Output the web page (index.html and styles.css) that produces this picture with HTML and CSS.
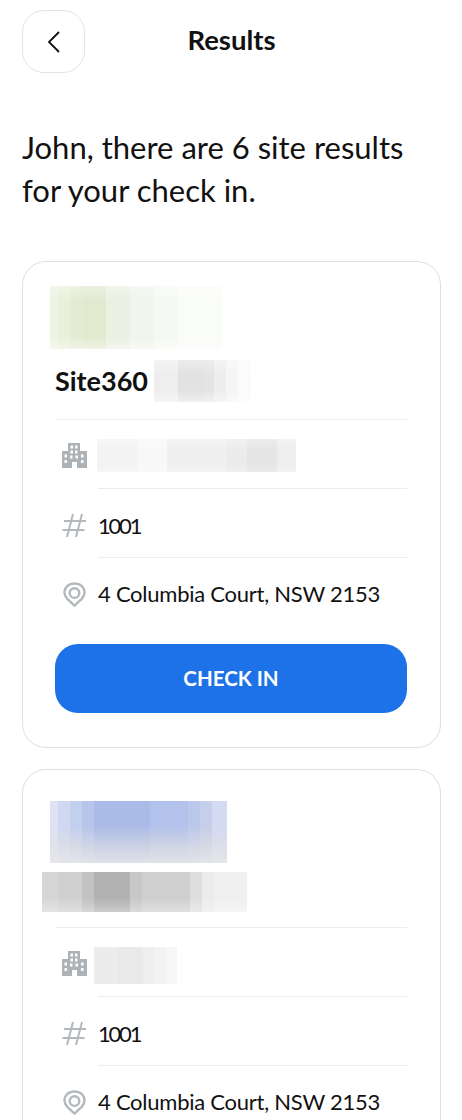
FILE: index.html
```html
<!DOCTYPE html>
<html lang="en">
<head>
<meta charset="utf-8">
<title>Results</title>
<link rel="stylesheet" href="styles.css">
</head>
<body>
<main class="page">
  <header class="topbar">
    <button class="back" aria-label="Back">
      <svg class="back-icon" viewBox="0 0 14 24" width="14" height="24"><path d="M12 2 L2 12 L12 22"/></svg>
    </button>
    <h1 class="title">Results</h1>
  </header>
  <p class="intro">John, there are 6 site results for your check in.</p>

  <section class="card">
    <div class="blur logo-a"></div>
    <div class="name-row"><span class="site-name">Site360</span><span class="blur name-a"></span></div>
    <div class="row first">
      <svg class="icon" viewBox="0 0 25 25"><path class="fill" fill-rule="evenodd" d="M6 0H18V8H25V25H15V19H10V25H0V8H6ZM8.500 2.500V5.500H11V2.500ZM13 2.500V5.500H15.500V2.500ZM8.500 7.500V10.500H11V7.500ZM13 7.500V10.500H15.500V7.500ZM2.500 11.500V14.500H5V11.500ZM2.500 17V20H5V17ZM8 12.500V15.500H10.500V12.500ZM13.500 12.500V15.500H16V12.500ZM19 11.500V14.500H21.500V11.500ZM19 17V20H21.500V17Z"/></svg>
      <div class="value"><span class="blur addr-a"></span></div>
    </div>
    <div class="row">
      <svg class="icon hash" viewBox="0 0 25 25"><path class="line" d="M11 1 L5 24 M20 1 L14 24 M2 8 H24 M0.500 17 H22.500"/></svg>
      <div class="value num">1001</div>
    </div>
    <div class="row last">
      <svg class="icon" viewBox="0 0 25 26"><path class="line wide" d="M12.500 24.500 L5 17.500 C-1 11 3 1.500 12.500 1.500 C22 1.500 26 11 20 17.500 Z"/><circle class="line wide" cx="12.500" cy="11.500" r="5"/></svg>
      <div class="value">4 Columbia Court, NSW 2153</div>
    </div>
    <button class="cta">CHECK IN</button>
  </section>

  <section class="card card-second">
    <div class="blur logo-b"></div>
    <div class="name-row"><span class="blur name-b"></span></div>
    <div class="row first">
      <svg class="icon" viewBox="0 0 25 25"><path class="fill" fill-rule="evenodd" d="M6 0H18V8H25V25H15V19H10V25H0V8H6ZM8.500 2.500V5.500H11V2.500ZM13 2.500V5.500H15.500V2.500ZM8.500 7.500V10.500H11V7.500ZM13 7.500V10.500H15.500V7.500ZM2.500 11.500V14.500H5V11.500ZM2.500 17V20H5V17ZM8 12.500V15.500H10.500V12.500ZM13.500 12.500V15.500H16V12.500ZM19 11.500V14.500H21.500V11.500ZM19 17V20H21.500V17Z"/></svg>
      <div class="value"><span class="blur addr-b"></span></div>
    </div>
    <div class="row">
      <svg class="icon hash" viewBox="0 0 25 25"><path class="line" d="M11 1 L5 24 M20 1 L14 24 M2 8 H24 M0.500 17 H22.500"/></svg>
      <div class="value num">1001</div>
    </div>
    <div class="row last">
      <svg class="icon" viewBox="0 0 25 26"><path class="line wide" d="M12.500 24.500 L5 17.500 C-1 11 3 1.500 12.500 1.500 C22 1.500 26 11 20 17.500 Z"/><circle class="line wide" cx="12.500" cy="11.500" r="5"/></svg>
      <div class="value">4 Columbia Court, NSW 2153</div>
    </div>
  </section>
</main>
</body>
</html>
```
FILE: styles.css
```css
* { box-sizing: border-box; }
html, body { margin: 0; height: 1120px; overflow: hidden; background: #fff; }
.page {
  padding: 10px 21px 0 22px;
  font-family: "Lato", "Liberation Sans", sans-serif;
  color: #111;
}
.topbar {
  position: relative;
  height: 63px;
  display: flex;
  align-items: center;
}
.back {
  width: 63px;
  height: 63px;
  padding: 0;
  border: 1px solid #e3e3e3;
  border-radius: 22px;
  background: #fff;
  display: flex;
  align-items: center;
  justify-content: center;
}
.back-icon { fill: none; stroke: #111; stroke-width: 1.800; margin-left: 1px; }
.title {
  position: absolute;
  left: 0;
  right: 0;
  top: 13px;
  margin: 0;
  text-align: center;
  font-size: 27.500px;
  line-height: 34px;
  font-weight: 700;
}
.intro {
  margin: 53px 0 0;
  width: 400px;
  font-size: 31px;
  line-height: 43px;
  font-weight: 400;
}
.card {
  margin-top: 49px;
  width: 419px;
  height: 487px;
  margin-bottom: 21px;
  padding: 24px 33px 0 32px;
  border: 1px solid #dedede;
  border-radius: 24px;
  background: #fff;
}
.card-second { margin-top: 0; padding-top: 31px; }
.blur { display: block; }
.logo-a {
  margin-left: -5px;
  width: 172px;
  height: 63px;
  background:
    linear-gradient(180deg, rgba(255,255,255,.35), rgba(255,255,255,0) 25%, rgba(255,255,255,0) 80%, rgba(255,255,255,.45)),
    linear-gradient(90deg, #eef3e2 0 8px, #e9efd9 8px 20px, #e4ebd2 20px 32px, #e2e9cf 32px 56px, #ebf0e2 56px 80px, #f1f5ec 80px 104px, #f6f9f3 104px 128px, #fafcf8 128px 172px);
}
.name-row {
  display: flex;
  align-items: center;
  gap: 6px;
  height: 42px;
  margin-top: 11px;
}
.card-second .name-row { margin-top: 8px; }
.site-name { font-size: 27px; font-weight: 700; color: #111; line-height: 42px; }
.name-a {
  width: 97px;
  height: 42px;
  background:
    linear-gradient(180deg, rgba(255,255,255,.35), rgba(255,255,255,0) 35%, rgba(255,255,255,0) 70%, rgba(255,255,255,.45)),
    linear-gradient(90deg, #eeeeee 0 24px, #e2e2e2 24px 48px, #e4e4e4 48px 60px, #ededed 60px 72px, #f5f5f5 72px 84px, #fbfbfb 84px 97px);
}
.row {
  display: flex;
  height: 69px;
  align-items: center;
}
.row.first { margin-top: 17px; border-top: 1px solid #ececec; height: 70px; }
.card-second .row.first { margin-top: 14px; }
.icon { width: 25px; height: 25px; flex: none; margin-left: 7px; margin-right: 11px; position: relative; top: 2px; }
.row.first .icon { top: 1px; }
.icon.hash { top: 2px; }
.fill { fill: #adb2b6; }
.line { fill: none; stroke: #b3b8bc; stroke-width: 2; }
.line.wide { stroke-width: 2.500; }
.value {
  flex: 1;
  align-self: stretch;
  display: flex;
  align-items: center;
  padding-top: 2px;
  font-size: 22px;
  letter-spacing: -.25px;
  border-bottom: 1px solid #ececec;
  color: #111;
}
.value.num { letter-spacing: -2.200px; padding-top: 4px; }
.row.first .value { padding-top: 3px; }
.card-second .row.first .value { padding-top: 7px; }
.row.last .value { border-bottom: 0; }
.addr-a {
  width: 199px;
  height: 33px;
  margin-left: -1px;
  background:
    linear-gradient(180deg, rgba(255,255,255,.3), rgba(255,255,255,0) 35%, rgba(255,255,255,0) 75%, rgba(255,255,255,.25)),
    linear-gradient(90deg, #f3f3f3 0 40px, #f8f8f8 40px 70px, #efefef 70px 130px, #ebebeb 130px 150px, #e5e5e5 150px 180px, #eeeeee 180px 199px);
}
.cta {
  display: block;
  width: 100%;
  height: 69px;
  margin-top: 17px;
  padding: 0 0 2px;
  border: 0;
  border-radius: 23px;
  background: #1d72e8;
  color: #fff;
  font: 700 20.500px "Lato", "Liberation Sans", sans-serif;
}
.logo-b {
  margin-left: -5px;
  width: 177px;
  height: 62px;
  background:
    linear-gradient(180deg, rgba(255,255,255,0) 40%, rgba(225,225,225,.55) 70%, rgba(232,232,232,.85)),
    linear-gradient(90deg, #dde3f5 0 8px, #cfd7f1 8px 20px, #c3cfee 20px 32px, #b7c5eb 32px 44px, #abbbe8 44px 100px, #b3c2ea 100px 138px, #bcc8eb 138px 150px, #c5ceea 150px 162px, #d3daf2 162px 177px);
}
.name-b {
  margin-left: -13px;
  width: 205px;
  height: 40px;
  background:
    linear-gradient(180deg, rgba(255,255,255,0) 65%, rgba(255,255,255,.35)),
    linear-gradient(90deg, #d6d6d6 0 16px, #d0d0d0 16px 40px, #c2c2c2 40px 52px, #b2b2b2 52px 88px, #c8c8c8 88px 100px, #cfcfcf 100px 148px, #dedede 148px 160px, #ebebeb 160px 172px, #f0f0f0 172px 205px);
}
.addr-b {
  width: 83px;
  height: 37px;
  margin-left: -4px;
  background: linear-gradient(90deg, #ececec 0 24px, #e9e9e9 24px 48px, #eeeeee 48px 60px, #f2f2f2 60px 72px, #f6f6f6 72px 83px);
}
```
